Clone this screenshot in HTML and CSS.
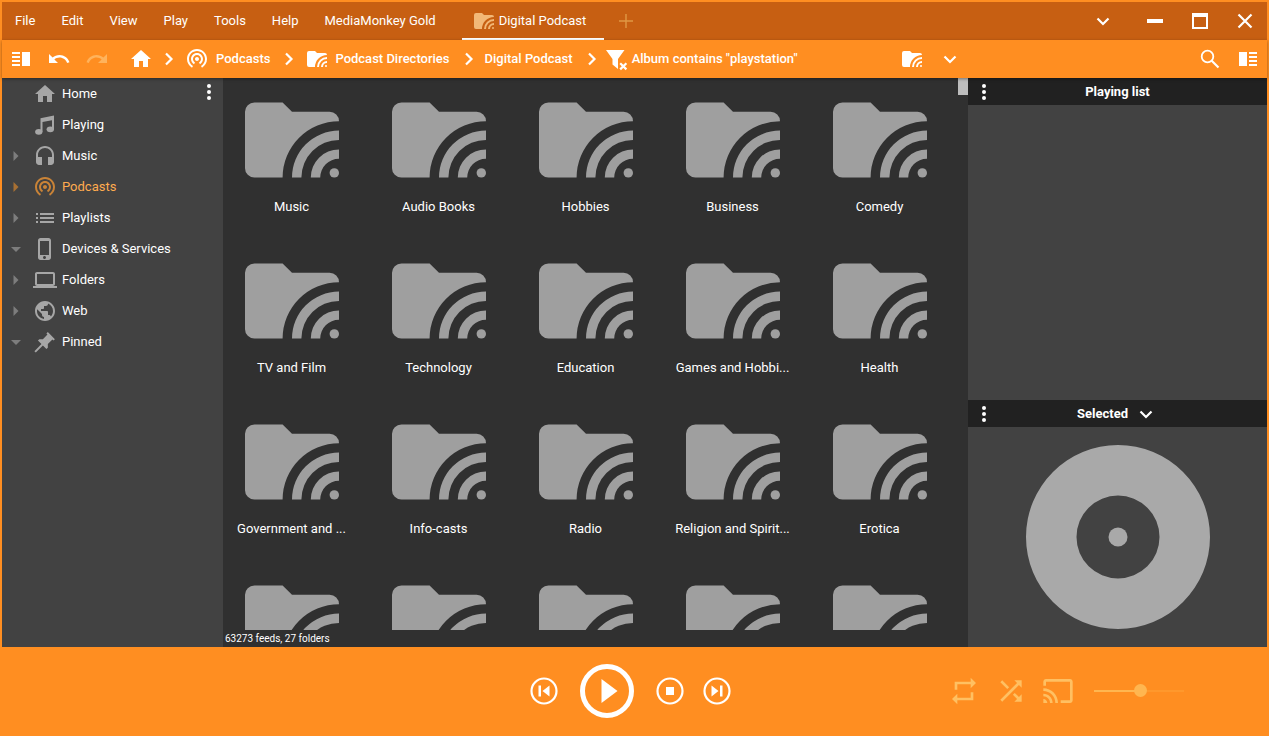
FILE: index.html
```html
<!DOCTYPE html>
<html lang="en">
<head>
<meta charset="utf-8">
<title>MediaMonkey</title>
<link rel="stylesheet" href="styles.css">
</head>
<body>
<svg class="sprite" aria-hidden="true">
  <symbol id="home" viewBox="0 0 24 24"><path d="M10 20v-6h4v6h5v-8h3L12 3 2 12h3v8z"/></symbol>
  <symbol id="note" viewBox="0 0 24 24"><path d="M7.500 5.200L21 2.500v13.800h-2V7.200L9.500 9.100v9.700h-2z"/><ellipse cx="5.800" cy="18.800" rx="3.700" ry="2.900"/><ellipse cx="17.300" cy="16.300" rx="3.700" ry="2.900"/></symbol>
  <symbol id="headphones" viewBox="0 0 24 24"><path d="M12 2c-4.970 0-9 4.030-9 9v7c0 1.660 1.340 3 3 3h3v-8H5v-2c0-3.870 3.130-7 7-7s7 3.130 7 7v2h-4v8h3c1.660 0 3-1.340 3-3v-7c0-4.970-4.030-9-9-9z"/></symbol>
  <symbol id="podcast" viewBox="0 0 24 24"><path d="M12 10c-1.100 0-2 .9-2 2s.9 2 2 2 2-.9 2-2-.9-2-2-2zm6 2c0-3.310-2.690-6-6-6s-6 2.690-6 6c0 2.220 1.210 4.150 3 5.190l1-1.740c-1.190-.7-2-1.970-2-3.450 0-2.210 1.790-4 4-4s4 1.790 4 4c0 1.480-.81 2.750-2 3.450l1 1.740c1.790-1.040 3-2.970 3-5.190zM12 2C6.480 2 2 6.480 2 12c0 3.700 2.010 6.920 4.990 8.650l1-1.730C5.610 17.530 4 14.960 4 12c0-4.420 3.580-8 8-8s8 3.580 8 8c0 2.960-1.610 5.530-4 6.920l1 1.730c2.990-1.730 5-4.950 5-8.650 0-5.520-4.480-10-10-10z"/></symbol>
  <symbol id="list" viewBox="0 0 24 24"><path d="M3 13h2v-2H3zm0 4h2v-2H3zm0-8h2V7H3zm4 4h14v-2H7zm0 4h14v-2H7zM7 7v2h14V7z"/></symbol>
  <symbol id="phone" viewBox="0 0 24 24"><path d="M15.500 1h-8C6.120 1 5 2.120 5 3.500v17C5 21.880 6.120 23 7.500 23h8c1.380 0 2.500-1.120 2.500-2.500v-17C18 2.120 16.880 1 15.500 1zm-4 21c-.83 0-1.500-.67-1.500-1.500s.67-1.500 1.500-1.500 1.500.67 1.500 1.500-.67 1.500-1.500 1.500zm4.500-4H7V4h9z"/></symbol>
  <symbol id="laptop" viewBox="0 0 24 24"><path d="M20 18c1.100 0 2-.9 2-2V6c0-1.100-.9-2-2-2H4c-1.100 0-2 .9-2 2v10c0 1.100.9 2 2 2H0v2h24v-2zM4 6h16v10H4z"/></symbol>
  <symbol id="globe" viewBox="0 0 24 24"><path d="M12 2C6.480 2 2 6.480 2 12s4.480 10 10 10 10-4.480 10-10S17.520 2 12 2zm-1 17.930c-3.950-.49-7-3.850-7-7.930 0-.62.08-1.210.21-1.790L9 15v1c0 1.100.9 2 2 2zm6.900-2.540c-.26-.81-1-1.390-1.900-1.390h-1v-3c0-.55-.45-1-1-1H8v-2h2c.55 0 1-.45 1-1V7h2c1.100 0 2-.9 2-2v-.41c2.930 1.190 5 4.060 5 7.410 0 2.080-.8 3.970-2.100 5.390z"/></symbol>
  <symbol id="pin" viewBox="0 0 24 24"><path transform="rotate(45 12 12)" d="M15.500 11.500V5H17V3H7v2h1.500v6.500L6 14v2h5v10h2V16h5v-2z"/></symbol>
  <symbol id="folder-cast" viewBox="0 0 20 16"><path d="M2 0h6l2 2h8a2 2 0 0 1 2 2A12 12 0 0 0 8 16H2a2 2 0 0 1-2-2V2a2 2 0 0 1 2-2zM20 6v2a8 8 0 0 0-8 8h-2A10 10 0 0 1 20 6zm0 4v2a4 4 0 0 0-4 4h-2a6 6 0 0 1 6-6z"/><circle cx="19" cy="15" r="1"/></symbol>
  <symbol id="undo" viewBox="0 0 24 24"><path d="M12.500 8c-2.650 0-5.050.99-6.900 2.600L2 7v9h9l-3.620-3.620c1.390-1.160 3.160-1.880 5.120-1.880 3.540 0 6.550 2.310 7.600 5.500l2.370-.78C21.080 11.030 17.150 8 12.500 8z"/></symbol>
  <symbol id="redo" viewBox="0 0 24 24"><path transform="matrix(-1 0 0 1 24 0)" d="M12.500 8c-2.650 0-5.050.99-6.900 2.600L2 7v9h9l-3.620-3.620c1.390-1.160 3.160-1.880 5.120-1.880 3.540 0 6.550 2.310 7.600 5.500l2.370-.78C21.080 11.030 17.150 8 12.500 8z"/></symbol>
  <symbol id="filter-off" viewBox="0 0 24 24"><path d="M2 3h18.500l-6.500 9v10l-5.500-4.500V12z"/><path class="line" d="M16.200 16.200l6.200 6.200m0-6.200l-6.200 6.200"/></symbol>
  <symbol id="next" viewBox="0 0 24 24"><path class="line" d="M9 6.500l5.500 5.500L9 17.500"/></symbol>
  <symbol id="down" viewBox="0 0 24 24"><path class="line" d="M6.500 9.500l5.500 5.500 5.500-5.500"/></symbol>
  <symbol id="plus" viewBox="0 0 24 24"><path class="line thin" d="M12 5v14M5 12h14"/></symbol>
  <symbol id="minimize" viewBox="0 0 24 24"><path d="M4 10h16v4H4z"/></symbol>
  <symbol id="maximize" viewBox="0 0 24 24"><path d="M4 4h16v16H4zm2 4v10h12V8z" fill-rule="evenodd"/></symbol>
  <symbol id="close" viewBox="0 0 24 24"><path class="line" d="M5.500 5.500l13 13m0-13l-13 13"/></symbol>
  <symbol id="search" viewBox="0 0 24 24"><circle class="line slim" cx="9.500" cy="9.500" r="5.800"/><path class="line" d="M13.500 13.500l7 7"/></symbol>
  <symbol id="panel-left" viewBox="0 0 24 24"><path d="M13 5h8v14h-8zM3 5h8v2H3zm0 4h8v2H3zm0 4h8v2H3zm0 4h8v2H3z"/></symbol>
  <symbol id="panel-right" viewBox="0 0 24 24"><path d="M3 5h8v14H3zM13 5h8v2h-8zm0 4h8v2h-8zm0 4h8v2h-8zm0 4h8v2h-8z"/></symbol>
  <symbol id="dots" viewBox="0 0 4 16"><circle cx="2" cy="2" r="2"/><circle cx="2" cy="8" r="2"/><circle cx="2" cy="14" r="2"/></symbol>
  <symbol id="expand" viewBox="0 0 10 10"><path d="M2.500 0v10l5-5z"/></symbol>
  <symbol id="collapse" viewBox="0 0 10 10"><path d="M0 3h10L5 8z"/></symbol>
  <symbol id="previous-track" viewBox="0 0 28 28"><circle class="line" cx="14" cy="14" r="12.500"/><path d="M8.500 8.500H11v11H8.500zM19.500 8.500v11L12.500 14z"/></symbol>
  <symbol id="play" viewBox="0 0 54 54"><circle class="line thick" cx="27" cy="27" r="24.500"/><path d="M21.500 15v24l16-12z"/></symbol>
  <symbol id="stop" viewBox="0 0 28 28"><circle class="line" cx="14" cy="14" r="12.500"/><path d="M10 10h8v8h-8z"/></symbol>
  <symbol id="next-track" viewBox="0 0 28 28"><circle class="line" cx="14" cy="14" r="12.500"/><path d="M17 8.500h2.500v11H17zM8.500 8.500v11l7-5.500z"/></symbol>
  <symbol id="repeat" viewBox="0 0 24 24"><path d="M7 7h10v3l4-4-4-4v3H5v6h2zm10 10H7v-3l-4 4 4 4v-3h12v-6h-2z"/></symbol>
  <symbol id="shuffle" viewBox="0 0 24 24"><path d="M10.590 9.170L5.410 4 4 5.410l5.170 5.170zM14.500 4l2.040 2.040L4 18.590 5.410 20 17.960 7.460 20 9.500V4zm.33 9.410l-1.410 1.410 3.130 3.130L14.500 20H20v-5.500l-2.040 2.040z"/></symbol>
  <symbol id="cast" viewBox="0 0 24 24"><path d="M21 3H3c-1.100 0-2 .9-2 2v3h2V5h18v14h-7v2h7c1.100 0 2-.9 2-2V5c0-1.100-.9-2-2-2zM1 18v3h3c0-1.660-1.340-3-3-3zm0-4v2c2.760 0 5 2.240 5 5h2c0-3.870-3.130-7-7-7zm0-4v2c4.970 0 9 4.030 9 9h2c0-6.080-4.930-11-11-11z"/></symbol>
  <symbol id="disc" viewBox="0 0 184 184"><path fill-rule="evenodd" d="M92 0a92 92 0 0 1 0 184a92 92 0 0 1 0-184zm0 50.500a41.500 41.500 0 0 0 0 83a41.500 41.500 0 0 0 0-83z"/><circle cx="92" cy="92" r="9.500"/></symbol>
</svg>

<div class="window">
  <header class="titlebar">
    <nav class="menu" aria-label="Main menu">
      <button>File</button>
      <button>Edit</button>
      <button>View</button>
      <button>Play</button>
      <button>Tools</button>
      <button>Help</button>
      <button>MediaMonkey Gold</button>
    </nav>
    <button class="tab"><svg class="folder-small"><use href="#folder-cast"/></svg>Digital Podcast</button>
    <button class="add-tab" aria-label="New tab"><svg class="icon"><use href="#plus"/></svg></button>
    <div class="window-buttons">
      <button class="tab-list" aria-label="Tab list"><svg class="icon"><use href="#down"/></svg></button>
      <button aria-label="Minimize"><svg class="icon"><use href="#minimize"/></svg></button>
      <button aria-label="Maximize"><svg class="icon"><use href="#maximize"/></svg></button>
      <button aria-label="Close"><svg class="icon"><use href="#close"/></svg></button>
    </div>
  </header>

  <div class="toolbar">
    <div class="history">
      <button aria-label="Toggle left panel"><svg class="icon"><use href="#panel-left"/></svg></button>
      <button aria-label="Undo"><svg class="icon"><use href="#undo"/></svg></button>
      <button class="disabled" aria-label="Redo" disabled><svg class="icon"><use href="#redo"/></svg></button>
    </div>
    <nav class="breadcrumb" aria-label="Location">
      <a class="root" href="#home" aria-label="Home"><svg class="icon"><use href="#home"/></svg></a>
      <svg class="separator"><use href="#next"/></svg>
      <a href="#podcasts"><svg class="icon"><use href="#podcast"/></svg>Podcasts</a>
      <svg class="separator"><use href="#next"/></svg>
      <a class="spaced" href="#directories"><svg class="folder-small"><use href="#folder-cast"/></svg>Podcast Directories</a>
      <svg class="separator"><use href="#next"/></svg>
      <a href="#digital">Digital Podcast</a>
      <svg class="separator"><use href="#next"/></svg>
      <a class="filter" href="#filter"><svg class="icon"><use href="#filter-off"/></svg>Album contains "playstation"</a>
    </nav>
    <div class="view-buttons">
      <button aria-label="View mode"><svg class="folder-small"><use href="#folder-cast"/></svg></button>
      <button aria-label="View options"><svg class="icon"><use href="#down"/></svg></button>
    </div>
    <div class="search-buttons">
      <button aria-label="Search"><svg class="icon"><use href="#search"/></svg></button>
      <button aria-label="Toggle right panel"><svg class="icon"><use href="#panel-right"/></svg></button>
    </div>
  </div>

  <div class="content">
    <aside class="sidebar">
      <ul class="tree">
        <li><a href="#home"><span class="arrow"></span><svg class="icon"><use href="#home"/></svg>Home</a></li>
        <li><a href="#playing"><span class="arrow"></span><svg class="icon"><use href="#note"/></svg>Playing</a></li>
        <li><a href="#music"><svg class="arrow"><use href="#expand"/></svg><svg class="icon"><use href="#headphones"/></svg>Music</a></li>
        <li><a class="current" href="#podcasts"><svg class="arrow"><use href="#expand"/></svg><svg class="icon"><use href="#podcast"/></svg>Podcasts</a></li>
        <li><a href="#playlists"><svg class="arrow"><use href="#expand"/></svg><svg class="icon"><use href="#list"/></svg>Playlists</a></li>
        <li><a href="#devices"><svg class="arrow"><use href="#collapse"/></svg><svg class="icon"><use href="#phone"/></svg>Devices &amp; Services</a></li>
        <li><a href="#folders"><svg class="arrow"><use href="#expand"/></svg><svg class="icon"><use href="#laptop"/></svg>Folders</a></li>
        <li><a href="#web"><svg class="arrow"><use href="#expand"/></svg><svg class="icon"><use href="#globe"/></svg>Web</a></li>
        <li><a href="#pinned"><svg class="arrow"><use href="#collapse"/></svg><svg class="icon"><use href="#pin"/></svg>Pinned</a></li>
      </ul>
      <button class="more" aria-label="Tree options"><svg class="dots"><use href="#dots"/></svg></button>
    </aside>

    <main class="browser">
      <div class="viewport">
        <div class="grid">
          <a href="#d"><svg class="folder"><use href="#folder-cast"/></svg><span>Music</span></a>
          <a href="#d"><svg class="folder"><use href="#folder-cast"/></svg><span>Audio Books</span></a>
          <a href="#d"><svg class="folder"><use href="#folder-cast"/></svg><span>Hobbies</span></a>
          <a href="#d"><svg class="folder"><use href="#folder-cast"/></svg><span>Business</span></a>
          <a href="#d"><svg class="folder"><use href="#folder-cast"/></svg><span>Comedy</span></a>
          <a href="#d"><svg class="folder"><use href="#folder-cast"/></svg><span>TV and Film</span></a>
          <a href="#d"><svg class="folder"><use href="#folder-cast"/></svg><span>Technology</span></a>
          <a href="#d"><svg class="folder"><use href="#folder-cast"/></svg><span>Education</span></a>
          <a href="#d"><svg class="folder"><use href="#folder-cast"/></svg><span>Games and Hobbi...</span></a>
          <a href="#d"><svg class="folder"><use href="#folder-cast"/></svg><span>Health</span></a>
          <a href="#d"><svg class="folder"><use href="#folder-cast"/></svg><span>Government and ...</span></a>
          <a href="#d"><svg class="folder"><use href="#folder-cast"/></svg><span>Info-casts</span></a>
          <a href="#d"><svg class="folder"><use href="#folder-cast"/></svg><span>Radio</span></a>
          <a href="#d"><svg class="folder"><use href="#folder-cast"/></svg><span>Religion and Spirit...</span></a>
          <a href="#d"><svg class="folder"><use href="#folder-cast"/></svg><span>Erotica</span></a>
          <a href="#d" aria-label="Folder"><svg class="folder"><use href="#folder-cast"/></svg></a>
          <a href="#d" aria-label="Folder"><svg class="folder"><use href="#folder-cast"/></svg></a>
          <a href="#d" aria-label="Folder"><svg class="folder"><use href="#folder-cast"/></svg></a>
          <a href="#d" aria-label="Folder"><svg class="folder"><use href="#folder-cast"/></svg></a>
          <a href="#d" aria-label="Folder"><svg class="folder"><use href="#folder-cast"/></svg></a>
        </div>
        <div class="scrollbar"><div class="thumb"></div></div>
      </div>
      <footer class="status">63273 feeds, 27 folders</footer>
    </main>

    <aside class="panels">
      <section class="playing-list">
        <header class="panel-head">
          <button aria-label="Playing list options"><svg class="dots"><use href="#dots"/></svg></button>
          <h2>Playing list</h2>
        </header>
      </section>
      <section>
        <header class="panel-head">
          <button aria-label="Preview options"><svg class="dots"><use href="#dots"/></svg></button>
          <h2><button class="preview-source">Selected<svg class="icon"><use href="#down"/></svg></button></h2>
        </header>
        <div class="artwork"><svg class="disc"><use href="#disc"/></svg></div>
      </section>
    </aside>
  </div>

  <footer class="player">
    <div class="transport">
      <button aria-label="Previous"><svg class="round"><use href="#previous-track"/></svg></button>
      <button aria-label="Play"><svg class="round-large"><use href="#play"/></svg></button>
      <div class="pair">
        <button aria-label="Stop"><svg class="round"><use href="#stop"/></svg></button>
        <button aria-label="Next"><svg class="round"><use href="#next-track"/></svg></button>
      </div>
    </div>
    <div class="options">
      <button aria-label="Repeat"><svg class="option"><use href="#repeat"/></svg></button>
      <button aria-label="Shuffle"><svg class="option"><use href="#shuffle"/></svg></button>
      <button aria-label="Cast"><svg class="option"><use href="#cast"/></svg></button>
      <input class="volume" type="range" min="0" max="100" value="52" aria-label="Volume">
    </div>
  </footer>
</div>
</body>
</html>
```

FILE: styles.css
```css
:root {
  --accent: #ff8e21;
  --title: #c75f12;
  --panel: #424242;
  --browser: #303030;
  --head: #212121;
  --muted: #a6a6a6;
  --faded: #ffc062;
}

* {
  box-sizing: border-box;
}

body {
  margin: 0;
  font: 13px/18px Roboto, "Liberation Sans", sans-serif;
  color: #fff;
}

button {
  display: flex;
  align-items: center;
  padding: 0;
  border: 0;
  background: none;
  color: inherit;
  font: inherit;
}

a {
  color: inherit;
  text-decoration: none;
}

svg {
  display: block;
  flex: none;
  fill: currentColor;
}

.line {
  fill: none;
  stroke: currentColor;
  stroke-width: 2.2;
}

.slim {
  stroke-width: 1.8;
}

.thin {
  stroke-width: 1.4;
}

.thick {
  stroke-width: 5;
}

.sprite {
  position: absolute;
  width: 0;
  height: 0;
}

.icon {
  width: 24px;
  height: 24px;
}

.folder-small {
  width: 20px;
  height: 16px;
}

.dots {
  width: 4px;
  height: 16px;
}

.window {
  display: flex;
  flex-direction: column;
  height: 100vh;
  border: 2px solid var(--accent);
  border-bottom: 0;
  background: var(--accent);
}

.titlebar {
  display: flex;
  align-items: center;
  height: 38px;
  padding: 0 10px 0 13px;
  background: var(--title);
}

.menu {
  display: flex;
  gap: 26px;
}

.tab {
  align-self: stretch;
  gap: 5px;
  margin-left: 26px;
  padding: 0 18px 0 12px;
  border-top: 2px solid transparent;
  border-bottom: 2px solid #fff;
}

.tab svg {
  color: #f2b877;
}

.add-tab {
  margin-left: 10px;
  color: #e09844;
}

.window-buttons {
  display: flex;
  gap: 21px;
  margin-left: auto;
}

.tab-list {
  margin-right: 7px;
}

.toolbar {
  position: relative;
  z-index: 1;
  display: flex;
  align-items: center;
  height: 38px;
  padding: 0 7px;
  font-weight: 500;
  box-shadow: 0 1px 3px rgba(0, 0, 0, 0.4);
  background: var(--accent);
}

.history {
  display: flex;
  gap: 14px;
}

.disabled {
  color: #ffb35c;
}

.breadcrumb {
  display: flex;
  flex: 1;
  align-items: center;
  gap: 4px;
  margin-left: 20px;
}

.breadcrumb a {
  display: flex;
  align-items: center;
  gap: 7px;
  margin-right: 3px;
}

.breadcrumb .root {
  margin-right: 0;
}

.breadcrumb .spaced {
  gap: 8px;
  margin-left: 2px;
}

.breadcrumb .filter {
  gap: 4px;
  margin-left: -4px;
}

.separator {
  width: 24px;
  height: 24px;
}

.view-buttons {
  display: flex;
  align-items: center;
  gap: 16px;
  width: 296px;
}

.search-buttons {
  display: flex;
  gap: 14px;
}

.content {
  display: grid;
  grid-template-columns: 221px 1fr 299px;
  flex: 1;
  min-height: 0;
}

.sidebar {
  display: flex;
  align-items: flex-start;
  background: var(--panel);
}

.tree {
  flex: 1;
  margin: 0;
  padding: 0;
  list-style: none;
}

.tree a {
  display: flex;
  align-items: center;
  height: 31px;
  padding-left: 9px;
}

.tree .icon {
  margin: 0 5px 0 12px;
  color: var(--muted);
}

.arrow {
  width: 10px;
  height: 10px;
  color: #7d7d7d;
}

.tree .current {
  color: #ffab4f;
}

.tree .current .icon {
  color: #c98337;
}

.tree .current .arrow {
  color: #a87033;
}

.more {
  padding: 6px 12px;
}

.browser {
  display: flex;
  flex-direction: column;
  min-width: 0;
  min-height: 0;
  background: var(--browser);
}

.viewport {
  display: flex;
  flex: 1;
  min-height: 0;
  overflow: hidden;
}

.grid {
  display: grid;
  flex: 1;
  grid-template-columns: repeat(auto-fill, 113px);
  grid-auto-rows: 127px;
  gap: 34px;
  align-content: start;
  padding: 24px 0 0 12px;
}

.grid a {
  display: flex;
  flex-direction: column;
  align-items: center;
  gap: 20px;
  white-space: nowrap;
}

.folder {
  width: 94px;
  height: 76px;
  color: #9f9f9f;
}

.scrollbar {
  width: 10px;
}

.thumb {
  height: 17px;
  background: #bdbdbd;
}

.status {
  height: 17px;
  padding-left: 2px;
  font-size: 10px;
  line-height: 17px;
}

.panels {
  display: flex;
  flex-direction: column;
  background: var(--panel);
}

.playing-list {
  flex: 1;
}

.panel-head {
  display: grid;
  grid-template-columns: 4px 1fr 4px;
  align-items: center;
  height: 27px;
  padding: 0 14px;
  background: var(--head);
}

.panel-head h2 {
  display: flex;
  justify-content: center;
  margin: 0;
  font-size: 13px;
  font-weight: 700;
}

.preview-source {
  gap: 6px;
}

.artwork {
  display: flex;
  justify-content: center;
  padding: 18px;
}

.disc {
  width: 184px;
  height: 184px;
  color: #a9a9a9;
}

.player {
  display: grid;
  grid-template-columns: 1fr auto 1fr;
  align-items: center;
  height: 89px;
  padding: 0 8px 2px 0;
}

.transport {
  display: flex;
  grid-column: 2;
  align-items: center;
  gap: 22px;
}

.pair {
  display: flex;
  gap: 19px;
}

.round {
  width: 28px;
  height: 28px;
}

.round-large {
  width: 54px;
  height: 54px;
}

.options {
  display: flex;
  justify-content: flex-end;
  align-items: center;
  gap: 15px;
  padding-right: 75px;
  color: var(--faded);
}

.option {
  width: 32px;
  height: 32px;
}

.volume {
  width: 90px;
  height: 14px;
  margin: 0 0 0 5px;
  appearance: none;
  background: linear-gradient(90deg, #ffb650 50%, #ff982c 50%) center / 100% 2px no-repeat;
}

.volume::-webkit-slider-thumb {
  appearance: none;
  width: 13px;
  height: 13px;
  border-radius: 50%;
  background: #ffb650;
}
```
